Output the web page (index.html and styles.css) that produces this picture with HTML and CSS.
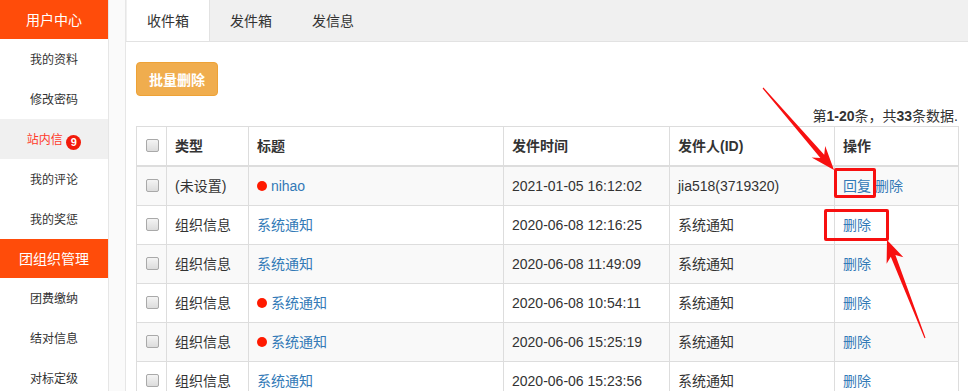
FILE: index.html
```html
<!DOCTYPE html>
<html lang="zh-CN">
<head>
<meta charset="utf-8">
<title>站内信</title>
<link rel="stylesheet" href="styles.css">
</head>
<body>
<div class="layout">
  <aside class="sidebar">
    <div class="side-head">用户中心</div>
    <a class="side-item">我的资料</a>
    <a class="side-item">修改密码</a>
    <a class="side-item active">站内信 <span class="badge">9</span></a>
    <a class="side-item">我的评论</a>
    <a class="side-item">我的奖惩</a>
    <div class="side-head">团组织管理</div>
    <a class="side-item">团费缴纳</a>
    <a class="side-item">结对信息</a>
    <a class="side-item">对标定级</a>
  </aside>
  <main class="panel">
    <ul class="tabs">
      <li class="tab active">收件箱</li>
      <li class="tab">发件箱</li>
      <li class="tab">发信息</li>
    </ul>
    <div class="content">
      <button class="btn-warning">批量删除</button>
      <div class="summary">第<b>1-20</b>条，共<b>33</b>条数据.</div>
      <table class="grid">
        <colgroup>
          <col class="c-check"><col class="c-type"><col class="c-title"><col class="c-time"><col class="c-from"><col class="c-op">
        </colgroup>
        <thead>
          <tr><th><span class="cb"></span></th><th>类型</th><th>标题</th><th>发件时间</th><th>发件人(ID)</th><th>操作</th></tr>
        </thead>
        <tbody>
          <tr><td><span class="cb"></span></td><td>(未设置)</td><td><span class="dot"></span> <a class="lnk">nihao</a></td><td>2021-01-05 16:12:02</td><td>jia518(3719320)</td><td><a class="lnk">回复</a> <a class="lnk">删除</a></td></tr>
          <tr><td><span class="cb"></span></td><td>组织信息</td><td><a class="lnk">系统通知</a></td><td>2020-06-08 12:16:25</td><td>系统通知</td><td><a class="lnk">删除</a></td></tr>
          <tr><td><span class="cb"></span></td><td>组织信息</td><td><a class="lnk">系统通知</a></td><td>2020-06-08 11:49:09</td><td>系统通知</td><td><a class="lnk">删除</a></td></tr>
          <tr><td><span class="cb"></span></td><td>组织信息</td><td><span class="dot"></span> <a class="lnk">系统通知</a></td><td>2020-06-08 10:54:11</td><td>系统通知</td><td><a class="lnk">删除</a></td></tr>
          <tr><td><span class="cb"></span></td><td>组织信息</td><td><span class="dot"></span> <a class="lnk">系统通知</a></td><td>2020-06-06 15:25:19</td><td>系统通知</td><td><a class="lnk">删除</a></td></tr>
          <tr><td><span class="cb"></span></td><td>组织信息</td><td><a class="lnk">系统通知</a></td><td>2020-06-06 15:23:56</td><td>系统通知</td><td><a class="lnk">删除</a></td></tr>
        </tbody>
      </table>
    </div>
  </main>
</div>
<div class="mark mark-reply"></div>
<div class="mark mark-del"></div>
<svg class="arrows" width="968" height="391" viewBox="0 0 968 391">
  <polygon fill="#f71010" points="762.6,88.4 763.4,87.6 824.2,154.7 825.2,146.0 834,170 811.6,157.6 820.4,157.9"/>
  <polygon fill="#f71010" points="924.5,338.2 925.5,337.8 895.4,255.0 903.4,257.2 887,240 886.6,263.8 890.8,256.8"/>
</svg>
</body>
</html>
```
FILE: styles.css
```css
html, body {
  margin: 0;
  padding: 0;
  height: 100%;
  overflow: hidden;
}
body {
  background: #fafafa;
  font-family: "Liberation Sans", "Noto Sans CJK SC", sans-serif;
  font-size: 14px;
  color: #333;
  position: relative;
}
.layout {
  display: flex;
  height: 391px;
}
.sidebar {
  width: 108px;
  flex: none;
  background: #fff;
  border-right: 1px solid #e6e6e6;
  display: flex;
  flex-direction: column;
}
.side-head {
  height: 39px;
  line-height: 39px;
  background: #ff4c0a;
  color: #fff;
  text-align: center;
  font-size: 14px;
  font-family: "Noto Sans CJK SC", sans-serif;
}
.side-head + .side-item { height: 40px; }
.side-item {
  height: 40px;
  line-height: 40px;
  text-align: center;
  font-size: 12px;
  color: #333;
  font-family: "Noto Sans CJK SC", sans-serif;
}
.side-item.active {
  background: #f0f0f0;
  color: #ff3a2a;
}
.badge {
  display: inline-block;
  width: 15px;
  height: 15px;
  line-height: 15px;
  border-radius: 50%;
  background: #f21a0a;
  color: #fff;
  font-family: "Liberation Sans", sans-serif;
  font-weight: bold;
  font-size: 11px;
  text-align: center;
  vertical-align: -2px;
  margin-left: 1px;
}
.panel {
  flex: 1;
  margin-left: 16px;
  background: #fff;
  border-left: 1px solid #e6e6e6;
  min-width: 0;
}
.tabs {
  list-style: none;
  margin: 0;
  padding: 0;
  display: flex;
  height: 41px;
  background: #f0f0f0;
  border-bottom: 1px solid #e2e2e2;
}
.tab {
  width: 82px;
  text-align: center;
  line-height: 40px;
  font-size: 14px;
  font-family: "Noto Sans CJK SC", sans-serif;
  color: #333;
}
.tab.active {
  background: #fff;
  border-right: 1px solid #e2e2e2;
  margin-left: 1px;
}
.content {
  padding: 20px 10px 0 10px;
}
.btn-warning {
  display: block;
  width: 82px;
  height: 34px;
  padding: 0;
  background: #f0ad4e;
  border: 1px solid #eea236;
  border-radius: 4px;
  color: #fff;
  font-size: 14px;
  font-family: "Noto Sans CJK SC", sans-serif;
  font-weight: bold;
}
.summary {
  margin-top: 10px;
  text-align: right;
  line-height: 20px;
  height: 20px;
  font-size: 14px;
}
.grid {
  width: 822px;
  border-collapse: collapse;
  table-layout: fixed;
  background: #fff;
}
.c-check { width: 30px; }
.c-type { width: 82px; }
.c-title { width: 255px; }
.c-time { width: 166px; }
.c-from { width: 165px; }
.c-op { width: 124px; }
.grid th, .grid td {
  border: 1px solid #ddd;
  padding: 9px 8px;
  line-height: 20px;
  text-align: left;
  white-space: nowrap;
  overflow: hidden;
}
.grid th {
  border-bottom-width: 2px;
  font-weight: bold;
}
.grid tbody tr:nth-child(odd) td { background: #f9f9f9; }
.grid th:first-child, .grid td:first-child {
  padding: 9px 0 9px 9px;
}
.cb {
  display: inline-block;
  width: 11px;
  height: 11px;
  border: 1px solid #a9a9a9;
  border-radius: 2px;
  background: linear-gradient(#f4f4f4, #dcdcdc);
  vertical-align: -1px;
}
.lnk {
  color: #337ab7;
  text-decoration: none;
}
.dot {
  display: inline-block;
  width: 10px;
  height: 10px;
  border-radius: 50%;
  background: #ff1a00;
  vertical-align: 0;
}
.mark {
  position: absolute;
  border: 3px solid #f71010;
  border-radius: 2px;
  box-sizing: border-box;
}
.mark-reply {
  left: 834px;
  top: 168px;
  width: 42px;
  height: 30px;
}
.mark-del {
  left: 824px;
  top: 209px;
  width: 65px;
  height: 32px;
}
.arrows {
  position: absolute;
  left: 0;
  top: 0;
  pointer-events: none;
}
```
